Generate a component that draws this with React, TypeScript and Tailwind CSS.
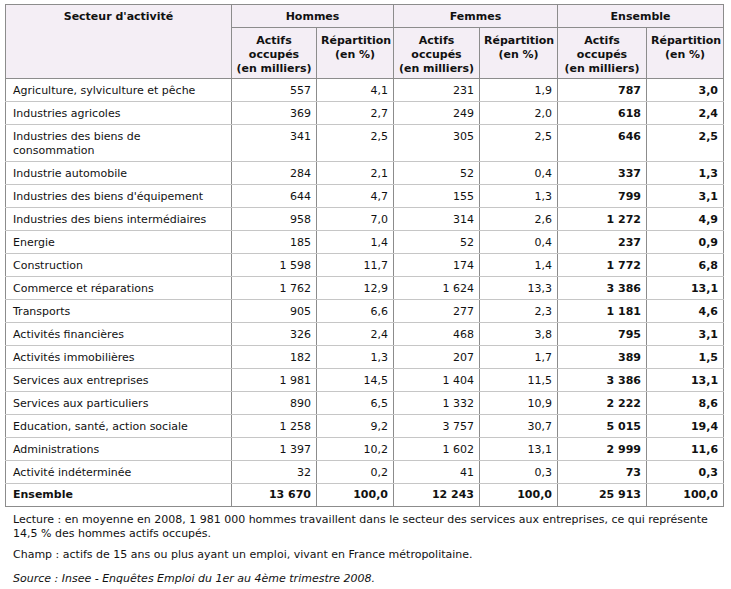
const rows: [string, string, string, string, string, string, string][] = [
  ['Agriculture, sylviculture et pêche', '557', '4,1', '231', '1,9', '787', '3,0'],
  ['Industries agricoles', '369', '2,7', '249', '2,0', '618', '2,4'],
  ['Industries des biens de consommation', '341', '2,5', '305', '2,5', '646', '2,5'],
  ['Industrie automobile', '284', '2,1', '52', '0,4', '337', '1,3'],
  ["Industries des biens d'équipement", '644', '4,7', '155', '1,3', '799', '3,1'],
  ['Industries des biens intermédiaires', '958', '7,0', '314', '2,6', '1 272', '4,9'],
  ['Energie', '185', '1,4', '52', '0,4', '237', '0,9'],
  ['Construction', '1 598', '11,7', '174', '1,4', '1 772', '6,8'],
  ['Commerce et réparations', '1 762', '12,9', '1 624', '13,3', '3 386', '13,1'],
  ['Transports', '905', '6,6', '277', '2,3', '1 181', '4,6'],
  ['Activités financières', '326', '2,4', '468', '3,8', '795', '3,1'],
  ['Activités immobilières', '182', '1,3', '207', '1,7', '389', '1,5'],
  ['Services aux entreprises', '1 981', '14,5', '1 404', '11,5', '3 386', '13,1'],
  ['Services aux particuliers', '890', '6,5', '1 332', '10,9', '2 222', '8,6'],
  ['Education, santé, action sociale', '1 258', '9,2', '3 757', '30,7', '5 015', '19,4'],
  ['Administrations', '1 397', '10,2', '1 602', '13,1', '2 999', '11,6'],
  ['Activité indéterminée', '32', '0,2', '41', '0,3', '73', '0,3'],
];

// header cells: a touch lower than body cells, like the original page
const th = 'border border-[#8c8c8c] bg-[#f4eef5] font-bold text-center align-top px-[4px]';
const td = 'border-x border-x-[#8c8c8c] border-y border-y-[#c6c6c6] align-top pt-[5px] pb-[3px]';

export default function App() {
  return (
    <div
      className="pl-[5px] pt-[4px] bg-white text-[#111] text-[11px] leading-[14px] w-[731px] h-[589px]"
      style={{ fontFamily: '"DejaVu Sans", Verdana, sans-serif' }}
    >
      <table className="border-collapse table-fixed w-[719px] border border-[#8c8c8c]">
        <colgroup>
          <col className="w-[226px]" />
          <col className="w-[85px]" />
          <col className="w-[77px]" />
          <col className="w-[86px]" />
          <col className="w-[78px]" />
          <col className="w-[89px]" />
          <col className="w-[77px]" />
        </colgroup>
        <thead>
          <tr>
            <th rowSpan={2} className={`${th} pt-[5px] pb-[3px]`}>Secteur d'activité</th>
            <th colSpan={2} className={`${th} pt-[5px] pb-[3px]`}>Hommes</th>
            <th colSpan={2} className={`${th} pt-[5px] pb-[3px]`}>Femmes</th>
            <th colSpan={2} className={`${th} pt-[5px] pb-[3px]`}>Ensemble</th>
          </tr>
          <tr>
            {[0, 1, 2].map((i) => (
              <>
                <th key={`a${i}`} className={`${th} pt-[6px] pb-[2px]`}>
                  Actifs
                  <br />
                  occupés
                  <br />
                  (en milliers)
                </th>
                <th key={`r${i}`} className={`${th} pt-[6px] pb-[2px]`}>
                  Répartition
                  <br />
                  (en %)
                </th>
              </>
            ))}
          </tr>
        </thead>
        <tbody>
          {rows.map((r) => (
            <tr key={r[0]}>
              <td className={`${td} pl-[7px] pr-[4px] text-left`}>
                {r[0] === 'Industries des biens de consommation' ? (
                  <>
                    Industries des biens de
                    <br />
                    consommation
                  </>
                ) : (
                  r[0]
                )}
              </td>
              {r.slice(1).map((v, j) => (
                <td
                  key={j}
                  className={`${td} pr-[5px] pl-[2px] text-right whitespace-nowrap ${j >= 4 ? 'font-bold' : ''}`}
                >
                  {v.replace(' ', '\u00a0')}
                </td>
              ))}
            </tr>
          ))}
          <tr className="font-bold">
            <td className="border border-[#8c8c8c] py-[4px] pl-[7px] text-left">Ensemble</td>
            {['13 670', '100,0', '12 243', '100,0', '25 913', '100,0'].map((v, j) => (
              <td key={j} className="border border-[#8c8c8c] py-[4px] pr-[5px] text-right whitespace-nowrap">
                {v.replace(' ', '\u00a0')}
              </td>
            ))}
          </tr>
        </tbody>
      </table>
      <div className="pl-[8px] pt-[6px]">
        <p>
          Lecture : en moyenne en 2008, 1 981 000 hommes travaillent dans le secteur des services aux entreprises, ce qui représente
          <br />
          14,5 % des hommes actifs occupés.
        </p>
        <p className="mt-[7px]">Champ : actifs de 15 ans ou plus ayant un emploi, vivant en France métropolitaine.</p>
        <p className="mt-[10px] italic">Source : Insee - Enquêtes Emploi du 1er au 4ème trimestre 2008.</p>
      </div>
    </div>
  );
}
